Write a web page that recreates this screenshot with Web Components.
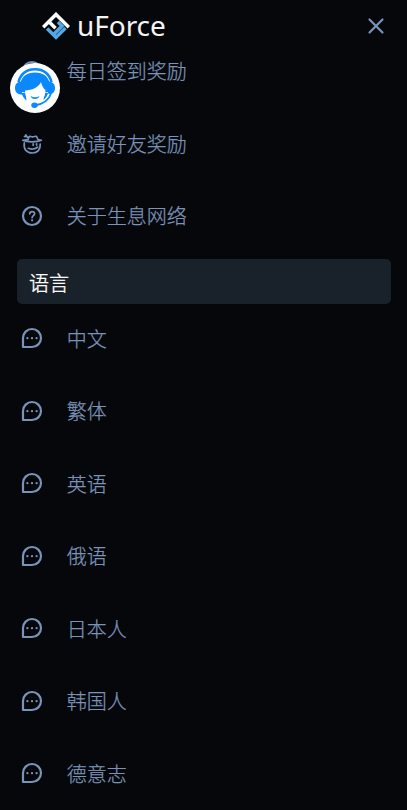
<!DOCTYPE html>
<html lang="zh-CN">
<head>
<meta charset="utf-8">
<title>uForce</title>
<style>
html,body{margin:0;height:100%;background:#05070a;overflow:hidden}
body{font-family:"Noto Sans CJK SC Light","Noto Sans CJK SC",sans-serif}
side-menu{height:100%}
</style>
</head>
<body>
<side-menu>
  <menu-header slot="header">uForce</menu-header>
  <menu-row icon="gift">每日签到奖励</menu-row>
  <menu-row icon="friend">邀请好友奖励</menu-row>
  <menu-row icon="help">关于生息网络</menu-row>
  <menu-heading>语言</menu-heading>
  <menu-row icon="chat">中文</menu-row>
  <menu-row icon="chat">繁体</menu-row>
  <menu-row icon="chat">英语</menu-row>
  <menu-row icon="chat">俄语</menu-row>
  <menu-row icon="chat">日本人</menu-row>
  <menu-row icon="chat">韩国人</menu-row>
  <menu-row icon="chat">德意志</menu-row>
  <support-button slot="float"></support-button>
</side-menu>
<script>
const define = (name, html) => customElements.define(name, class extends HTMLElement {
  connectedCallback() {
    if (this.shadowRoot) return;
    const t = document.createElement('template');
    t.innerHTML = typeof html === 'function' ? html(this) : html;
    this.attachShadow({mode: 'open'}).append(t.content.cloneNode(true));
  }
});

const icons = {
  gift: '<circle cx="12" cy="12" r="9"/><path d="M8 12l3 3 5-6"/>',
  friend: '<g stroke-width="1.700"><path d="M4.300 10.800C3.300 17 6.500 21 12.300 21c5.200 0 8.300-3.300 7.900-9"/><path d="M2.800 8.300c4.500 2 14 2 18.600 0l-3.500-.8-.9-2.200c-.4-1-1.400-1.300-2.600-.8-1.300.5-2.300.5-3.600 0-1-.4-1.700-.1-2 .9l-.8 2.200zM7.600 5 4.500 4.400M5.800 2.900l1.600 2.300"/><path d="M8.300 16.300c2.500 1.200 7 1 9.300-1.200M13.200 11.800v1.500M16.600 11.800v1.300"/></g>',
  help: '<circle cx="12" cy="12" r="9"/><path d="M9.700 9.900c.1-3.200 4.900-3 4.900-.2 0 1.900-2.500 1.900-2.500 4" stroke-width="1.700"/><circle cx="12.100" cy="16.300" r="1.100" fill="currentColor" stroke="none"/>',
  chat: '<path d="M3 21v-9a9 9 0 1 1 9 9z"/><g fill="currentColor" stroke="none"><circle cx="7.400" cy="12.200" r="1.150"/><circle cx="12" cy="12.200" r="1.150"/><circle cx="16.600" cy="12.200" r="1.150"/></g>'
};

define('side-menu', `<style>
:host{display:flex;flex-direction:column;position:relative;height:100%;overflow:hidden;background:#05070a;color:#7a93b8}
nav{display:flex;flex-direction:column;margin-top:-17px}
</style><slot name="header"></slot><nav><slot></slot></nav><slot name="float"></slot>`);

define('menu-header', `<style>
:host{display:flex;flex:none;align-items:center;height:52px;box-sizing:border-box;padding:0 21px 0 42px;color:#f4f4f4;font:28px/36px "Noto Sans",sans-serif}
.logo{width:28px;height:28px;margin-right:7px}
span{letter-spacing:-.05px;margin-top:-2px}
.close{margin-left:auto;width:20px;height:20px;color:#7a93b8}
svg{display:block}
</style>
<svg class="logo" viewBox="0 0 28 28" fill="none" stroke-width="3.500">
<path stroke="#fff" d="M1.200 15.200 14 2.400l12.800 12.800M7 9.800l6.500 6.500"/>
<path stroke="#54a7e5" d="M5.100 16.500 14 25.400l9.500-9.500M12.500 21.500l7.500-7.500-4-4"/>
</svg><span><slot></slot></span>
<svg class="close" viewBox="0 0 20 20" stroke="currentColor" stroke-width="2.200" stroke-linecap="round"><path d="M3.500 3.500l13 13M16.500 3.500l-13 13"/></svg>`);

define('menu-row', el => `<style>
:host{display:flex;flex:none;align-items:center;height:72.5px;padding-left:20px;font-size:20px;line-height:30px;font-weight:300}
svg{display:block;width:24px;height:24px;margin-right:22.75px}
span{-webkit-text-stroke:.25px currentColor}
:host([icon=chat]) span{padding-top:1px}
</style><svg viewBox="0 0 24 24" fill="none" stroke="currentColor" stroke-width="2.200" stroke-linecap="round" stroke-linejoin="round">${icons[el.getAttribute('icon')]}</svg><span><slot></slot></span>`);

define('menu-heading', `<style>
:host{display:flex;flex:none;align-items:center;height:45px;margin:6.500px 16px -2px 17px;padding-left:12px;border-radius:5px;background:#19212a;color:#fff;font-size:20px;line-height:30px}
span{padding-top:2px;-webkit-text-stroke:.35px currentColor}
</style><span><slot></slot></span>`);

define('support-button', `<style>
:host{display:block;position:absolute;left:10px;top:63px;width:50px;height:50px;border-radius:50%;background:#fff}
svg{display:block}
</style><svg width="50" height="50" viewBox="0 0 50 50" fill="none">
<path d="M8.500 19C11 10 17 6.200 25 6.200S39 10 41.500 19" stroke="#0b88fb" stroke-width="2.600"/>
<path d="M10.500 20C12 13 17 9.500 25 9.500S38 13 39.500 20v9h-29z" fill="#0b88fb"/>
<path d="M12 18.500v13c-4.700 0-7-2.500-7-6.500s2.300-6.500 7-6.500zM38 18.500v13c4.700 0 7-2.500 7-6.500s-2.300-6.500-7-6.500z" fill="#0b88fb"/>
<path d="M11.500 30c1 3 2.500 5.500 5 7.500l-1-8M38.500 30c-1 3-2.500 5.500-5 7.500l1-8" fill="#0b88fb"/>
<path d="M15 27.500c7-.3 13.500-3 16-8.500 1 4 2.500 6.500 4.500 8C35.500 35 31 40 25 40S15 35 15 27.500z" fill="#fff"/>
<path d="M20.500 33c2.800 1.800 6.300 1.800 9 0-1 4-8 4-9 0z" fill="#0b88fb"/>
<path d="M40 31c-2 6.500-7 10.500-15.500 11.500" stroke="#fff" stroke-width="4"/>
<path d="M41 30.500c-2 6.500-7 10.500-16.500 12" stroke="#0b88fb" stroke-width="1.800"/>
<ellipse cx="24.500" cy="42.300" rx="3.200" ry="2.700" fill="#0b88fb"/>
</svg>`);
</script>
</body>
</html>
